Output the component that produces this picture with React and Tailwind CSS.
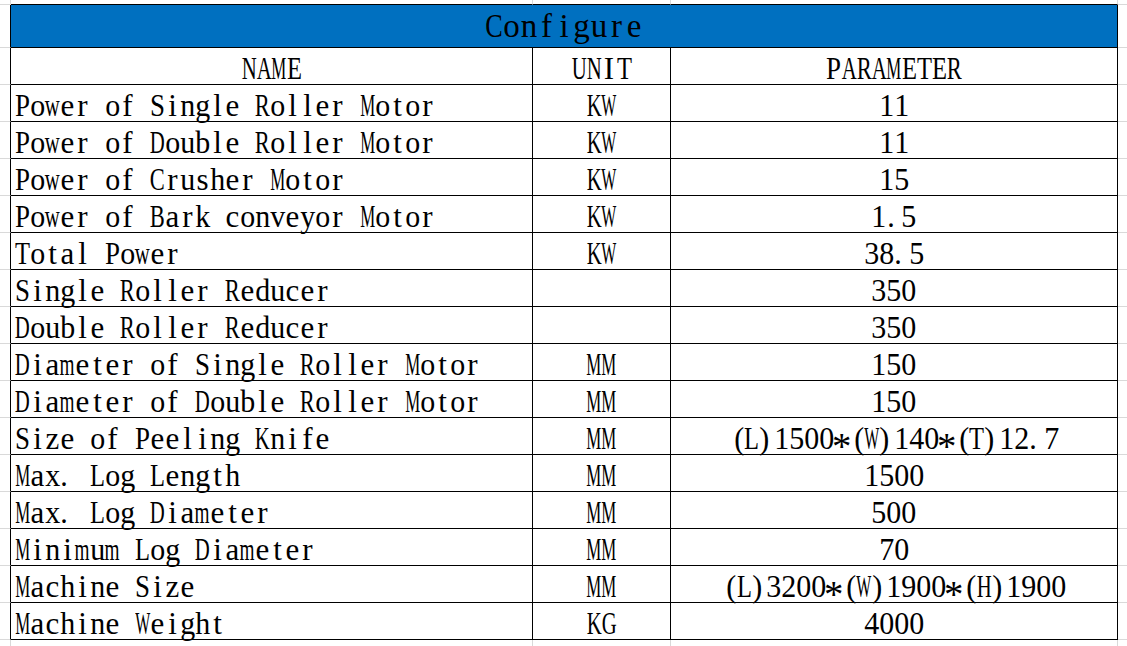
import React from "react";

// advance widths of Times/Liberation Serif, per 1000 em
const TIMES = {
  A: 722, B: 667, C: 667, D: 722, E: 611, F: 556, G: 722, H: 722, I: 333, J: 389,
  K: 722, L: 611, M: 889, N: 722, O: 722, P: 556, Q: 722, R: 667, S: 556, T: 611,
  U: 722, V: 722, W: 944, X: 722, Y: 722, Z: 611,
  a: 444, b: 500, c: 444, d: 500, e: 444, f: 333, g: 500, h: 500, i: 278, j: 278,
  k: 500, l: 278, m: 778, n: 500, o: 500, p: 500, q: 500, r: 333, s: 389, t: 278,
  u: 500, v: 500, w: 722, x: 500, y: 500, z: 444,
};

const rows = [
  ["Power of Single Roller Motor", "KW", "11"],
  ["Power of Double Roller Motor", "KW", "11"],
  ["Power of Crusher Motor", "KW", "15"],
  ["Power of Bark conveyor Motor", "KW", "1.5"],
  ["Total Power", "KW", "38.5"],
  ["Single Roller Reducer", "", "350"],
  ["Double Roller Reducer", "", "350"],
  ["Diameter of Single Roller Motor", "MM", "150"],
  ["Diameter of Double Roller Motor", "MM", "150"],
  ["Size of Peeling Knife", "MM", "(L)1500*(W)140*(T)12.7"],
  ["Max. Log Length", "MM", "1500"],
  ["Max. Log Diameter", "MM", "500"],
  ["Minimum Log Diameter", "MM", "70"],
  ["Machine Size", "MM", "(L)3200*(W)1900*(H)1900"],
  ["Machine Weight", "KG", "4000"],
];

// half-width cells, like the sheet's SimSun text
const Mono = ({ text, cell = 15, size = 31, big = false }) => {
  const fit = (cell / size) * 1000;
  return [...text].map((ch, i) => {
    const w = TIMES[ch] ?? 500;
    const sx = Math.min(1, fit / w);
    let justify = "justify-center";
    if (ch === "(") justify = "justify-end";
    if (ch === ")" || ch === ".") justify = "justify-start";
    const transform = ch === "*" ? "translateY(7px) scale(1.25)" : `scaleX(${sx})`;
    return (
      <span
        key={i}
        className={`inline-flex ${justify} ${big ? "w-[17.5px]" : "w-[15px]"}`}
      >
        <span className="inline-block" style={{ transform }}>
          {ch === " " ? "\u00a0" : ch}
        </span>
      </span>
    );
  });
};

const App = () => {
  return (
    <div className="w-[1127px] h-[646px] bg-white overflow-hidden text-black font-['Liberation_Serif','Times_New_Roman',serif] text-[31px]">
      <div className="grid h-full grid-cols-[11px_522px_138px_447px_1fr] grid-rows-[5px_43px_repeat(16,37px)_1fr]">
        {/* top margin */}
        <div className="border-r border-b border-[#d9d9d9]" />
        <div className="border-r border-b border-r-[#d9d9d9] border-b-black" />
        <div className="border-r border-b border-r-[#d9d9d9] border-b-black" />
        <div className="border-r border-b border-r-[#d9d9d9] border-b-black" />
        <div className="border-b border-[#d9d9d9]" />

        {/* title */}
        <div className="border-r border-b border-r-black border-b-[#d9d9d9]" />
        <div className="col-span-3 bg-[#0070c0] border-r border-b border-black flex items-center justify-center leading-none text-[33px]">
          <div>
            <Mono text="Configure" cell={17.5} size={33} big />
          </div>
        </div>
        <div className="border-b border-[#d9d9d9]" />

        {/* header */}
        <div className="border-r border-b border-r-black border-b-[#d9d9d9]" />
        <div className="border-r border-b border-black flex items-end justify-center leading-[30px]">
          <div>
            <Mono text="NAME" />
          </div>
        </div>
        <div className="border-r border-b border-black flex items-end justify-center leading-[30px]">
          <div>
            <Mono text="UNIT" />
          </div>
        </div>
        <div className="border-r border-b border-black flex items-end justify-center leading-[30px]">
          <div>
            <Mono text="PARAMETER" />
          </div>
        </div>
        <div className="border-b border-[#d9d9d9]" />

        {rows.map(([name, unit, param]) => (
          <React.Fragment key={name}>
            <div className="border-r border-b border-r-black border-b-[#d9d9d9]" />
            <div className="border-r border-b border-black flex items-end pl-[4px] leading-[30px] whitespace-nowrap">
              <div>
                <Mono text={name} />
              </div>
            </div>
            <div className="border-r border-b border-black flex items-end justify-center leading-[30px]">
              <div>
                <Mono text={unit} />
              </div>
            </div>
            <div className="border-r border-b border-black flex items-end justify-center leading-[30px] whitespace-nowrap">
              <div>
                <Mono text={param} />
              </div>
            </div>
            <div className="border-b border-[#d9d9d9]" />
          </React.Fragment>
        ))}

        {/* bottom margin */}
        <div className="border-r border-[#d9d9d9]" />
        <div className="border-r border-[#d9d9d9]" />
        <div className="border-r border-[#d9d9d9]" />
        <div className="border-r border-[#d9d9d9]" />
        <div />
      </div>
    </div>
  );
};

export default App;
